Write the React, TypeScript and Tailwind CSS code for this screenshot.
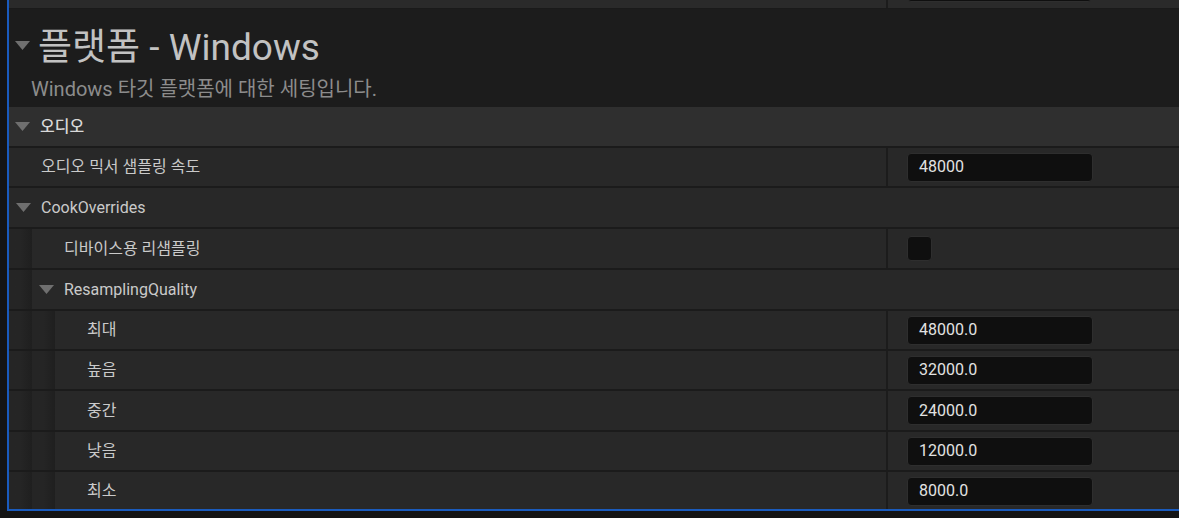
import React from "react";

type Row = {
  label: string;
  depth: number;
  expandable?: boolean;
  kind?: "number" | "check" | "none";
  value?: string;
  h: string;
};

const rows: Row[] = [
  { label: "오디오 믹서 샘플링 속도", depth: 0, kind: "number", value: "48000", h: "h-[40px]" },
  { label: "CookOverrides", depth: 0, expandable: true, kind: "none", h: "h-[41px]" },
  { label: "디바이스용 리샘플링", depth: 1, kind: "check", h: "h-[41px]" },
  { label: "ResamplingQuality", depth: 1, expandable: true, kind: "none", h: "h-[41px]" },
  { label: "최대", depth: 2, kind: "number", value: "48000.0", h: "h-[40px]" },
  { label: "높음", depth: 2, kind: "number", value: "32000.0", h: "h-[40px]" },
  { label: "중간", depth: 2, kind: "number", value: "24000.0", h: "h-[41px]" },
  { label: "낮음", depth: 2, kind: "number", value: "12000.0", h: "h-[40px]" },
  { label: "최소", depth: 2, kind: "number", value: "8000.0", h: "h-[40px]" },
];

function Caret() {
  return (
    <svg width="15" height="9" viewBox="0 0 15 9" className="shrink-0">
      <path d="M0 0 H15 L7.5 9 Z" fill="#6f6f6f" />
    </svg>
  );
}

function ValueBox({ value }: { value: string }) {
  return (
    <div className="w-[186px] h-[29px] rounded-[4px] bg-[#0f0f0f] border border-[#2e2e2e] flex items-center pl-[11px] text-[16px] text-[#e2e2e2]">
      {value}
    </div>
  );
}

function PropertyRow({ row }: { row: Row }) {
  const split = row.kind !== "none";
  return (
    <div className={`flex ${row.h} shrink-0 border-t-2 border-[#1b1b1b] bg-[#282828]`}>
      {Array.from({ length: row.depth }).map((_, i) => (
        <div
          key={i}
          className="w-[23px] shrink-0 bg-gradient-to-r from-[#252525] via-[#252525] to-[#1f1f1f]"
        />
      ))}
      <div className="flex-1 flex items-center relative">
        {row.expandable && (
          <div className="absolute left-[7px] top-[15px]">
            <Caret />
          </div>
        )}
        <span className="pl-[32px] text-[16px] text-[#cacaca] whitespace-nowrap">{row.label}</span>
      </div>
      {split && (
        <>
          <div className="w-[2px] shrink-0 bg-[#1c1c1c]" />
          <div className="w-[291px] shrink-0 flex items-center pl-[19px]">
            {row.kind === "number" && <ValueBox value={row.value ?? ""} />}
            {row.kind === "check" && (
              <div className="w-[25px] h-[25px] rounded-[4px] bg-[#0f0f0f] border border-[#2e2e2e]" />
            )}
          </div>
        </>
      )}
    </div>
  );
}

export default function App() {
  return (
    <div
      className="w-[1179px] h-[518px] bg-[#141414] flex overflow-hidden"
      style={{ fontFamily: "Roboto, 'Noto Sans CJK KR', sans-serif" }}
    >
      <div className="w-[7px] shrink-0" />
      <div className="flex-1 flex flex-col">
        <div className="h-[511px] flex flex-col border-l-2 border-b-2 border-l-[#1a5bbd] border-b-[#1a5bbd] overflow-hidden">
          {/* partial row above */}
          <div className="flex h-[8px] bg-[#2a2a2a] overflow-hidden shrink-0">
            <div className="flex-1" />
            <div className="w-[2px] bg-[#1c1c1c]" />
            <div className="w-[291px] pl-[19px]">
              <div className="w-[185px] h-[28px] -mt-[26px] rounded-[4px] bg-[#0f0f0f] border border-[#2e2e2e]" />
            </div>
          </div>
          <div className="h-[1px] bg-[#1a1a1a] shrink-0" />

          {/* section header */}
          <div className="h-[98px] bg-[#1c1c1c] shrink-0 flex flex-col">
            <div className="flex items-center h-[56px] pt-[20px]">
              <div className="pl-[6px] pr-[8px] -mt-[4px]">
                <Caret />
              </div>
              <span className="text-[37px] leading-none text-[#c2c2c2]">플랫폼 - Windows</span>
            </div>
            <div className="pl-[22px] pt-[14px] text-[20px] leading-none text-[#8c8c8c]">
              Windows 타깃 플랫폼에 대한 세팅입니다.
            </div>
          </div>

          {/* category */}
          <div className="h-[39px] bg-[#2f2f2f] shrink-0 flex items-center relative">
            <div className="absolute left-[6px] top-[15px]">
              <Caret />
            </div>
            <span className="pl-[31px] text-[16px] font-medium text-[#d8d8d8]">오디오</span>
          </div>

          {rows.map((r) => (
            <PropertyRow key={r.label} row={r} />
          ))}
          <div className="flex-1 bg-[#282828]" />
        </div>
      </div>
    </div>
  );
}
